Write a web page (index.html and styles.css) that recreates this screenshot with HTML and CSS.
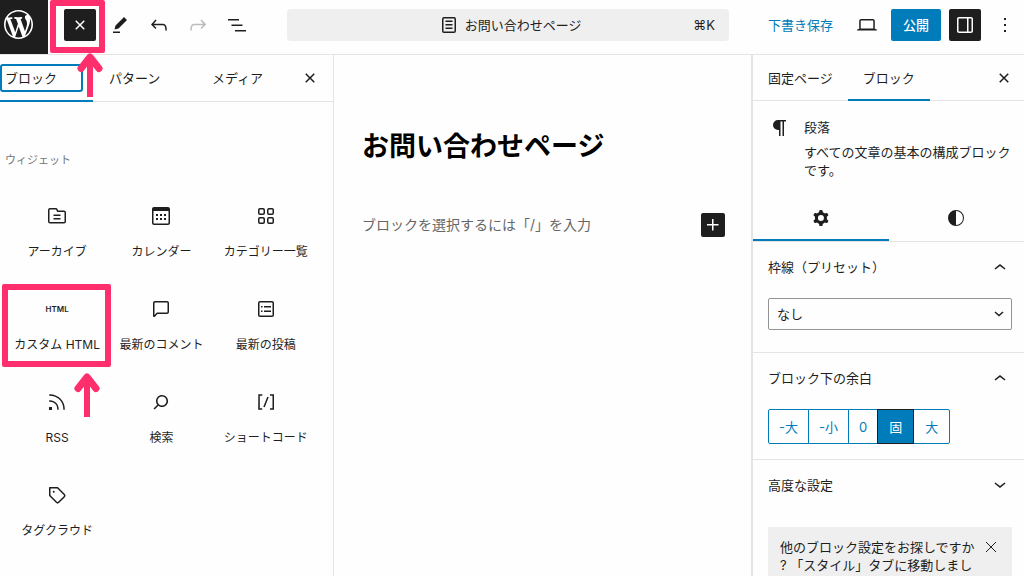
FILE: index.html
```html
<!DOCTYPE html>
<html lang="ja">
<head>
<meta charset="utf-8">
<meta name="viewport" content="width=device-width, initial-scale=1">
<title>お問い合わせページ</title>
<link rel="stylesheet" href="styles.css">
</head>
<body>
<div class="editor">
  <header class="topbar">
    <a class="logo" href="#" aria-label="WordPress">
      <svg class="logo-mark" viewBox="0 0 20 20"><path d="M20 10c0-5.51-4.49-10-10-10C4.48 0 0 4.49 0 10c0 5.52 4.48 10 10 10 5.51 0 10-4.48 10-10zM7.78 15.37L4.37 6.22c.55-.02 1.17-.08 1.17-.08.5-.06.44-1.13-.06-1.11 0 0-1.45.11-2.37.11-.18 0-.37 0-.58-.01C4.12 2.69 6.87 1.11 10 1.11c2.33 0 4.45.87 6.05 2.34-.68-.11-1.65.39-1.65 1.58 0 .74.45 1.36.9 2.1.35.61.55 1.36.55 2.46 0 1.49-1.4 5-1.4 5l-3.03-8.37c.54-.02.82-.17.82-.17.5-.05.44-1.25-.06-1.22 0 0-1.44.12-2.38.12-.87 0-2.33-.12-2.33-.12-.5-.03-.56 1.2-.06 1.22l.92.08 1.26 3.41zM17.41 10c.24-.64.74-1.87.43-4.25.7 1.29 1.05 2.71 1.05 4.25 0 3.29-1.73 6.24-4.4 7.78.97-2.59 1.94-5.2 2.92-7.78zM6.1 18.09C3.12 16.65 1.11 13.53 1.11 10c0-1.3.23-2.48.72-3.59C3.25 10.3 4.67 14.2 6.1 18.09zm4.03-6.63l2.58 6.98c-.86.29-1.76.45-2.71.45-.79 0-1.57-.11-2.29-.33.81-2.38 1.62-4.74 2.42-7.1z"/></svg>
    </a>
    <div class="tools">
      <div class="marked">
        <button class="icon-btn dark" aria-label="ブロック挿入ツールを閉じる"><svg class="icon" viewBox="0 0 24 24"><path d="M12 13.06l3.712 3.713 1.061-1.06L13.061 12l3.712-3.712-1.06-1.06L12 10.938 8.288 7.227l-1.061 1.06L10.939 12l-3.712 3.712 1.06 1.061L12 13.061z"/></svg></button>
        <span class="mark mark-inserter"></span>
        <svg class="arrow arrow-inserter" viewBox="0 0 26 44"><path d="M13 44V5"/><path class="head" d="M4 15.500L13 4L22 15.500"/></svg>
      </div>
      <div class="tool-group">
        <button class="icon-btn" aria-label="ツール"><svg class="icon" viewBox="0 0 24 24"><path d="m19 7-3-3-8.500 8.500-1 4 4-1L19 7Zm-7 11.500H5V20h7v-1.500Z"/></svg></button>
        <button class="icon-btn" aria-label="元に戻す"><svg class="icon" viewBox="0 0 24 24"><path d="M18.300 11.700c-.6-.6-1.400-.9-2.300-.9H6.700l2.900-3.300-1.100-1-4.500 5L8.500 16l1-1-2.700-2.700H16c.5 0 .9.2 1.300.5 1 1 1 3.400 1 4.500v.3h1.500v-.2c0-1.500 0-4.300-1.500-5.700z"/></svg></button>
        <button class="icon-btn" disabled aria-label="やり直す"><svg class="icon" viewBox="0 0 24 24"><path d="M15.600 6.500l-1.100 1 2.900 3.300H8c-.9 0-1.700.3-2.300.9-1.400 1.500-1.400 4.200-1.400 5.600v.2h1.500v-.3c0-1.100 0-3.500 1-4.500.3-.3.7-.5 1.300-.5h9.200L14.500 15l1.100 1.100 4.600-4.600-4.600-5z"/></svg></button>
        <button class="icon-btn" aria-label="ドキュメント概観"><svg class="icon" viewBox="0 0 24 24"><path d="M3 6h11v1.500H3V6Zm3.500 5.500h11V13h-11v-1.500ZM21 17H10v1.500h11V17Z"/></svg></button>
      </div>
    </div>
    <button class="command-bar">
      <span class="command-title"><svg class="icon" viewBox="0 0 24 24"><path d="M15.500 7.500h-7V9h7V7.500Zm-7 3.500h7v1.500h-7V11Zm7 3.500h-7V16h7v-1.500Z"/><path fill-rule="evenodd" d="M17 4H7a2 2 0 0 0-2 2v12a2 2 0 0 0 2 2h10a2 2 0 0 0 2-2V6a2 2 0 0 0-2-2ZM7 5.500h10a.5.5 0 0 1 .5.5v12a.5.5 0 0 1-.5.5H7a.5.5 0 0 1-.5-.5V6a.5.5 0 0 1 .5-.5Z"/></svg>お問い合わせページ</span>
      <span class="shortcut">⌘K</span>
    </button>
    <div class="actions">
      <a class="save" href="#">下書き保存</a>
      <button class="icon-btn view" aria-label="表示"><svg class="icon" viewBox="0 0 24 24"><path fill-rule="evenodd" d="M20.500 16h-.7V8c0-1.100-.9-2-2-2H6.200c-1.100 0-2 .9-2 2v8h-.7c-.8 0-1.500.7-1.500 1.500h20c0-.8-.7-1.500-1.500-1.500zM5.700 8c0-.3.2-.5.5-.5h11.600c.3 0 .5.2.5.5v7.600H5.700V8z"/></svg></button>
      <button class="publish">公開</button>
      <button class="icon-btn dark" aria-label="設定"><svg class="icon" viewBox="0 0 24 24"><path fill-rule="evenodd" d="M18 4H6c-1.100 0-2 .9-2 2v12c0 1.100.9 2 2 2h12c1.100 0 2-.9 2-2V6c0-1.100-.9-2-2-2zm-4 14.500H6c-.3 0-.5-.2-.5-.5V6c0-.3.2-.5.5-.5h8v13zm4.500-.5c0 .3-.2.5-.5.5h-2.500v-13H18c.3 0 .5.2.5.5v12z"/></svg></button>
      <button class="icon-btn" aria-label="オプション"><svg class="icon" viewBox="0 0 24 24"><path d="M13 19h-2v-2h2v2zm0-6h-2v-2h2v2zm0-6h-2V5h2v2z"/></svg></button>
    </div>
  </header>

  <div class="workspace">
    <aside class="inserter">
      <div class="inserter-tabs" role="tablist">
        <button class="tab current" role="tab" aria-selected="true"><span class="focus-ring">ブロック</span></button>
        <button class="tab" role="tab">パターン</button>
        <button class="tab" role="tab">メディア</button>
        <button class="icon-btn" aria-label="閉じる"><svg class="icon" viewBox="0 0 24 24"><path d="M12 13.06l3.712 3.713 1.061-1.06L13.061 12l3.712-3.712-1.06-1.06L12 10.938 8.288 7.227l-1.061 1.06L10.939 12l-3.712 3.712 1.06 1.061L12 13.061z"/></svg></button>
      </div>
      <h2 class="group-title">ウィジェット</h2>
      <div class="blocks">
        <button class="block"><svg class="icon" viewBox="0 0 24 24"><path fill-rule="evenodd" d="M11.934 7.406a1 1 0 0 0 .914.594H19a.5.5 0 0 1 .5.5v9a.5.5 0 0 1-.5.5H5a.5.5 0 0 1-.5-.5V6a.5.5 0 0 1 .5-.5h5.764a.5.5 0 0 1 .447.276l.723 1.630Zm1.064-1.216a.5.5 0 0 0 .462.310H19a2 2 0 0 1 2 2v9a2 2 0 0 1-2 2H5a2 2 0 0 1-2-2V6a2 2 0 0 1 2-2h5.764a2 2 0 0 1 1.789 1.106l.445 1.084ZM8.500 10.500h7V12h-7v-1.500Zm7 3.500h-7v1.500h7V14Z"/></svg><span>アーカイブ</span></button>
        <button class="block"><svg class="icon" viewBox="0 0 24 24"><path fill-rule="evenodd" d="M19 3H5c-1.100 0-2 .9-2 2v14c0 1.100.9 2 2 2h14c1.100 0 2-.9 2-2V5c0-1.100-.9-2-2-2zm.5 16c0 .3-.2.5-.5.5H5c-.3 0-.5-.2-.5-.5V7h15v12zM9 10H7v2h2v-2zm0 4H7v2h2v-2zm4-4h-2v2h2v-2zm4 0h-2v2h2v-2zm-4 4h-2v2h2v-2zm4 0h-2v2h2v-2z"/></svg><span>カレンダー</span></button>
        <button class="block"><svg class="icon outline" viewBox="0 0 24 24"><rect x="4.750" y="4.750" width="5.500" height="5.500" rx="1.200"/><rect x="13.750" y="4.750" width="5.500" height="5.500" rx="1.200"/><rect x="4.750" y="13.750" width="5.500" height="5.500" rx="1.200"/><rect x="13.750" y="13.750" width="5.500" height="5.500" rx="1.200"/></svg><span>カテゴリー一覧</span></button>
        <div class="marked">
          <button class="block"><span class="html-icon" aria-hidden="true">HTML</span><span>カスタム HTML</span></button>
          <span class="mark mark-html"></span>
          <svg class="arrow arrow-html" viewBox="0 0 26 44"><path d="M13 44V5"/><path class="head" d="M4 15.500L13 4L22 15.500"/></svg>
        </div>
        <button class="block"><svg class="icon" viewBox="0 0 24 24"><path fill-rule="evenodd" d="M18 4H6c-1.100 0-2 .9-2 2v12.900c0 .6.5 1.100 1.100 1.100.3 0 .5-.1.8-.3L8.500 17H18c1.100 0 2-.9 2-2V6c0-1.100-.9-2-2-2zm.5 11c0 .3-.2.5-.5.5H7.900l-2.400 2.400V6c0-.3.2-.5.5-.5h12c.3 0 .5.2.5.5v9z"/></svg><span>最新のコメント</span></button>
        <button class="block"><svg class="icon" viewBox="0 0 24 24"><path fill-rule="evenodd" d="M18 5.500H6a.5.5 0 0 0-.5.5v12a.5.5 0 0 0 .5.5h12a.5.5 0 0 0 .5-.5V6a.5.5 0 0 0-.5-.5ZM6 4h12a2 2 0 0 1 2 2v12a2 2 0 0 1-2 2H6a2 2 0 0 1-2-2V6a2 2 0 0 1 2-2Zm1 5h1.500v1.500H7V9Zm1.500 4.500H7V15h1.500v-1.500ZM10 9h7v1.500h-7V9Zm7 4.500h-7V15h7v-1.500Z"/></svg><span>最新の投稿</span></button>
        <button class="block"><svg class="icon" viewBox="0 0 24 24"><path d="M5 10.200h-.8v1.500H5c1.900 0 3.800.8 5.100 2.100 1.400 1.400 2.100 3.200 2.100 5.100v.8h1.500V19c0-2.300-.9-4.500-2.600-6.200-1.600-1.600-3.800-2.600-6.100-2.600zm10.400-1.600C12.600 5.800 8.900 4.200 5 4.200h-.8v1.500H5c3.500 0 6.900 1.400 9.400 3.900s3.900 5.800 3.900 9.400v.8h1.500V19c0-3.900-1.600-7.600-4.400-10.400zM4 20h3v-3H4v3z"/></svg><span>RSS</span></button>
        <button class="block"><svg class="icon" viewBox="0 0 24 24"><path d="M13 5c-3.300 0-6 2.700-6 6 0 1.400.5 2.700 1.300 3.700l-3.800 3.800 1.100 1.100 3.800-3.800c1 .8 2.300 1.300 3.700 1.300 3.300 0 6-2.700 6-6S16.300 5 13 5zm0 10.500c-2.500 0-4.500-2-4.500-4.500s2-4.500 4.500-4.500 4.500 2 4.500 4.500-2 4.500-4.500 4.500z"/></svg><span>検索</span></button>
        <button class="block"><svg class="icon" viewBox="0 0 24 24"><path d="M16 4.200v1.500h2.500v12.500H16v1.500h4V4.200h-4zM4.200 19.800h4v-1.500H5.800V5.800h2.500V4.200h-4l-.1 15.600zm5.100-3.100l1.400.6 4-10-1.400-.6-4 10z"/></svg><span>ショートコード</span></button>
        <button class="block"><svg class="icon" viewBox="0 0 24 24"><path fill-rule="evenodd" d="M4.750 4a.75.75 0 0 0-.75.75v7.826c0 .2.08.39.22.53l6.720 6.716a2.313 2.313 0 0 0 3.276-.001l5.610-5.611a2.315 2.315 0 0 0 0-3.264L13.104 4.220a.75.75 0 0 0-.53-.22H4.750ZM19 12.576a.815.815 0 0 1-.236.574l-5.610 5.611a.814.814 0 0 1-1.153 0L5.500 12.264V5.500h6.763l6.500 6.502a.816.816 0 0 1 .237.574ZM8.750 9.750a1 1 0 1 0 0-2 1 1 0 0 0 0 2Z"/></svg><span>タグクラウド</span></button>
      </div>
    </aside>

    <main class="canvas">
      <h1 class="page-title">お問い合わせページ</h1>
      <div class="paragraph-row">
        <p class="placeholder">ブロックを選択するには「/」を入力</p>
        <button class="add" aria-label="ブロックを追加"><svg class="icon" viewBox="0 0 24 24"><path d="M11 12.500V17.500H12.500V12.500H17.500V11H12.500V6H11V11H6V12.500H11Z"/></svg></button>
      </div>
    </main>

    <aside class="settings">
      <div class="settings-tabs" role="tablist">
        <button class="tab" role="tab">固定ページ</button>
        <button class="tab current" role="tab" aria-selected="true">ブロック</button>
        <button class="icon-btn" aria-label="設定を閉じる"><svg class="icon" viewBox="0 0 24 24"><path d="M12 13.06l3.712 3.713 1.061-1.06L13.061 12l3.712-3.712-1.06-1.06L12 10.938 8.288 7.227l-1.061 1.06L10.939 12l-3.712 3.712 1.06 1.061L12 13.061z"/></svg></button>
      </div>
      <div class="card">
        <svg class="icon" viewBox="0 0 24 24"><path d="M18 4H10a5 5 0 0 0 0 10H11V20H12.500V5.500H14.500V20H16V5.500H18Z"/></svg>
        <div class="card-text">
          <h2 class="card-title">段落</h2>
          <p class="card-desc">すべての文章の基本の構成ブロックです。</p>
        </div>
      </div>
      <div class="view-tabs" role="tablist">
        <button class="view-tab current" role="tab" aria-selected="true" aria-label="設定"><svg class="icon" viewBox="0 0 24 24"><path fill-rule="evenodd" d="M10.289 4.836A1 1 0 0111.275 4h1.306a1 1 0 01.987.836l.244 1.466c.787.260 1.503.679 2.108 1.218l1.393-.522a1 1 0 011.216.437l.653 1.130a1 1 0 01-.23 1.273l-1.148.944a6.025 6.025 0 010 2.435l1.149.946a1 1 0 01.23 1.272l-.653 1.130a1 1 0 01-1.216.437l-1.394-.522c-.605.540-1.320.958-2.108 1.218l-.244 1.466a1 1 0 01-.987.836h-1.306a1 1 0 01-.986-.836l-.244-1.466a5.995 5.995 0 01-2.108-1.218l-1.394.522a1 1 0 01-1.217-.436l-.653-1.131a1 1 0 01.23-1.272l1.149-.946a6.026 6.026 0 010-2.435l-1.148-.944a1 1 0 01-.23-1.272l.653-1.131a1 1 0 011.217-.437l1.393.522a5.994 5.994 0 012.108-1.218l.244-1.466zM14.929 12a3 3 0 11-6 0 3 3 0 016 0z"/></svg></button>
        <button class="view-tab" role="tab" aria-label="スタイル"><svg class="icon" viewBox="0 0 24 24"><path fill-rule="evenodd" d="M20 12a8 8 0 1 1-16 0 8 8 0 0 1 16 0Zm-1 0a7 7 0 0 1-7 7V5a7 7 0 0 1 7 7Z"/></svg></button>
      </div>
      <section class="panel">
        <button class="panel-head" aria-expanded="true"><label for="border">枠線（プリセット）</label><svg class="icon" viewBox="0 0 24 24"><path d="M6.500 13.400L12 9l5.500 4.400-.9 1.200L12 11l-4.500 3.600-1-1.200z"/></svg></button>
        <div class="select-box">
          <select id="border"><option>なし</option></select>
          <svg class="select-arrow" viewBox="0 0 10 6"><path d="M1 1L5 4.500L9 1"/></svg>
        </div>
      </section>
      <section class="panel">
        <button class="panel-head" aria-expanded="true">ブロック下の余白<svg class="icon" viewBox="0 0 24 24"><path d="M6.500 13.400L12 9l5.500 4.400-.9 1.200L12 11l-4.500 3.600-1-1.200z"/></svg></button>
        <div class="spacing" role="group" aria-label="ブロック下の余白">
          <button>-大</button><button>-小</button><button>0</button><button class="on" aria-pressed="true">固</button><button>大</button>
        </div>
      </section>
      <section class="panel last">
        <button class="panel-head" aria-expanded="false">高度な設定<svg class="icon" viewBox="0 0 24 24"><path d="M17.500 10.600L12 15l-5.500-4.400.9-1.200L12 13l4.500-3.600 1 1.200z"/></svg></button>
      </section>
      <div class="notice">
        <p>他のブロック設定をお探しですか ? 「スタイル」タブに移動しまし</p>
        <button class="dismiss" aria-label="閉じる"><svg viewBox="0 0 12 12"><path d="M1 1L11 11M11 1L1 11"/></svg></button>
      </div>
    </aside>
  </div>
</div>
</body>
</html>
```

FILE: styles.css
```css
:root {
  --ink: #1e1e1e;
  --blue: #007cba;
  --line: #e4e4e4;
  --pink: #ff2f6d;
}

* { box-sizing: border-box; }

body {
  margin: 0;
  color: var(--ink);
  background: #fefefe;
  font: 13px/18px Inter, "Noto Sans CJK JP", sans-serif;
}

h1, h2, p { margin: 0; }

button {
  padding: 0;
  border: 0;
  background: none;
  color: inherit;
  font: inherit;
}

.icon {
  display: block;
  flex: none;
  width: 24px;
  height: 24px;
  fill: currentColor;
}

.icon.outline {
  fill: none;
  stroke: currentColor;
  stroke-width: 1.5;
}

.icon-btn {
  display: flex;
  flex: none;
  align-items: center;
  justify-content: center;
  width: 32px;
  height: 32px;
  border-radius: 2px;
}

.icon-btn:disabled { color: #bbb; }

.dark {
  color: #fff;
  background: var(--ink);
}

.editor {
  display: flex;
  flex-direction: column;
  height: 100vh;
  overflow: hidden;
}

/* Top bar */
.topbar {
  display: flex;
  flex: none;
  border-bottom: 1px solid var(--line);
}

.logo {
  display: flex;
  align-items: center;
  width: 48px;
  height: 54px;
  padding: 0 0 5px 4px;
  background: var(--ink);
}

.logo-mark {
  width: 29px;
  height: 29px;
  fill: #fff;
}

.tools {
  display: flex;
  gap: 7px;
  align-items: flex-start;
  padding: 9px 34px 0 16px;
}

.tool-group {
  display: flex;
  gap: 7px;
  padding-left: 1px;
}

.command-bar {
  display: flex;
  flex: 1;
  align-items: center;
  height: 32px;
  margin-top: 9px;
  padding: 0 14px;
  border-radius: 4px;
  background: #efefef;
}

.command-title {
  display: flex;
  flex: 1;
  gap: 4px;
  align-items: center;
  justify-content: center;
  padding-left: 24px;
}

.actions {
  display: flex;
  gap: 8px;
  align-items: center;
  height: 32px;
  margin-top: 9px;
  padding: 0 3px 0 39px;
}

.save {
  color: var(--blue);
  text-decoration: none;
}

.view { margin-left: 10px; }

.publish {
  height: 32px;
  padding: 0 12px;
  border-radius: 2px;
  color: #fff;
  background: var(--blue);
  font-weight: 500;
}

/* Highlights drawn over the interface */
.marked { position: relative; }

.mark {
  position: absolute;
  z-index: 2;
  border: 6px solid var(--pink);
  border-radius: 2px;
  pointer-events: none;
}

.mark-inserter { inset: -9px -9px -12px -14px; }
.mark-html { inset: -5px -2px 15px -3px; }

.arrow {
  position: absolute;
  z-index: 3;
  width: 26px;
  height: 44px;
  overflow: visible;
  fill: none;
  stroke: var(--pink);
  stroke-width: 6;
  pointer-events: none;
}

.arrow .head {
  stroke-width: 7;
  stroke-linecap: round;
  stroke-linejoin: round;
}

.arrow-inserter { top: 44px; left: 13px; }
.arrow-html { top: 84px; left: 69px; }

.workspace {
  display: flex;
  flex: 1;
  min-height: 0;
}

/* Block inserter */
.inserter {
  flex: none;
  width: 334px;
  border-right: 1px solid var(--line);
}

.inserter-tabs {
  display: flex;
  align-items: center;
  height: 47px;
  border-bottom: 1px solid var(--line);
}

.inserter-tabs .tab {
  flex: none;
  width: 103px;
  height: 47px;
  padding: 0 16px;
  text-align: left;
  white-space: nowrap;
}

.inserter-tabs .tab.current {
  width: 93px;
  padding: 0;
  border-top: 2px solid transparent;
  border-bottom: 2px solid var(--blue);
}

.inserter-tabs .tab:nth-child(3) { width: 80px; }

.inserter-tabs .icon-btn {
  margin-right: 7px;
  margin-left: auto;
}

.focus-ring {
  display: block;
  width: 83px;
  padding: 3px;
  border: 2px solid var(--blue);
  border-radius: 3px;
}

.group-title {
  padding: 49px 5px 0;
  color: #757575;
  font-size: 11px;
  font-weight: 400;
}

.blocks {
  display: grid;
  grid-template-columns: repeat(3, 1fr);
  padding: 27px 15px 0 5px;
}

.block {
  display: flex;
  flex-direction: column;
  gap: 15px;
  align-items: center;
  width: 100%;
  height: 93px;
  padding-top: 8px;
  font-size: 12px;
  white-space: nowrap;
}

.html-icon {
  font-size: 8px;
  font-weight: 600;
  line-height: 24px;
}

/* Canvas */
.canvas {
  flex: 1;
  min-width: 0;
  padding: 72px 26px 0 28px;
}

.page-title {
  color: #000;
  font-size: 27px;
  line-height: 40px;
}

.paragraph-row {
  display: flex;
  align-items: center;
  justify-content: space-between;
  padding-top: 46px;
}

.placeholder {
  color: #666;
  font-size: 14px;
}

.add {
  border-radius: 2px;
  color: #fff;
  background: var(--ink);
}

/* Settings */
.settings {
  flex: none;
  width: 273px;
  border-left: 2px solid var(--line);
}

.settings-tabs {
  display: flex;
  align-items: center;
  height: 46px;
  border-bottom: 1px solid var(--line);
}

.settings-tabs .tab {
  height: 46px;
  padding: 0 15px;
}

.settings-tabs .tab.current {
  border-top: 2px solid transparent;
  border-bottom: 2px solid var(--blue);
}

.settings-tabs .icon-btn {
  margin-right: 4px;
  margin-left: auto;
}

.card {
  display: flex;
  gap: 12px;
  padding: 15px 8px 0 15px;
}

.card-text {
  display: grid;
  gap: 7px;
  padding-top: 2px;
}

.card-title {
  font-size: 13px;
  font-weight: 400;
}

.view-tabs {
  display: flex;
  margin-top: 15px;
  border-bottom: 1px solid var(--line);
}

.view-tab {
  display: flex;
  flex: 1;
  align-items: center;
  justify-content: center;
  height: 47px;
}

.view-tab.current {
  border-top: 2px solid transparent;
  border-bottom: 2px solid var(--blue);
}

.panel {
  padding: 13px 12px 15px 15px;
  border-bottom: 1px solid var(--line);
}

.panel.last { border-bottom: 0; }

.panel-head {
  display: flex;
  align-items: center;
  justify-content: space-between;
  width: 100%;
  text-align: left;
}

.select-box {
  position: relative;
  margin: 19px 0 7px;
}

.select-box select {
  display: block;
  width: 100%;
  height: 32px;
  padding: 0 8px;
  border: 1px solid #949494;
  border-radius: 2px;
  appearance: none;
  color: inherit;
  background: transparent;
  font: inherit;
}

.select-arrow {
  position: absolute;
  top: 13px;
  right: 8px;
  width: 10px;
  height: 6px;
  fill: none;
  stroke: var(--ink);
  stroke-width: 1.5;
  pointer-events: none;
}

.spacing {
  display: flex;
  margin-top: 19px;
}

.spacing button {
  height: 35px;
  margin-right: -1px;
  padding: 0 10px;
  border: 1px solid var(--blue);
  color: var(--blue);
}

.spacing button:first-child { border-radius: 2px 0 0 2px; }
.spacing button:last-child { border-radius: 0 2px 2px 0; }

.spacing .on,
.spacing .on + button { padding: 0 11px; }

.spacing .on {
  z-index: 1;
  border-color: var(--ink);
  color: #fff;
  background: var(--blue);
}

.notice {
  display: flex;
  gap: 7px;
  margin: 15px 12px 0 15px;
  padding: 11px 15px 12px 12px;
  background: #efefef;
}

.notice p { flex: 1; }

.dismiss {
  align-self: flex-start;
  padding: 3px 0;
}

.dismiss svg {
  display: block;
  width: 12px;
  height: 12px;
  fill: none;
  stroke: currentColor;
}
```
